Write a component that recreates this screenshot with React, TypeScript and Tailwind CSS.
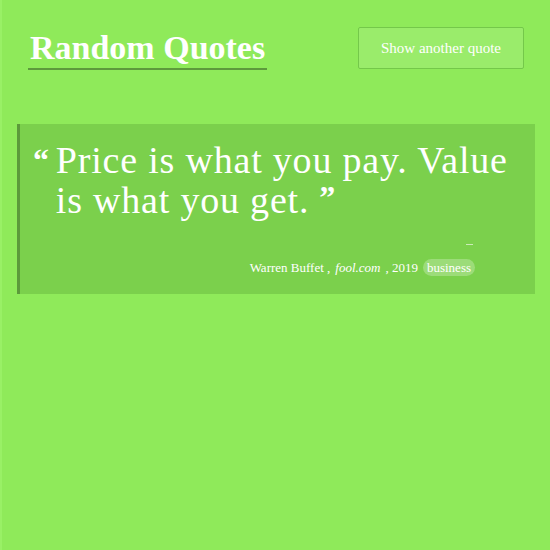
export default function App() {
  return (
    <div className="min-h-[550px] w-full bg-[#8fea5a] border-l-2 border-[#99f066] font-['Liberation_Serif',serif] text-white">
      {/* Header */}
      <header className="flex items-start justify-between pl-[26px] pr-[26px] pt-[29px]">
        <h1 className="border-b-2 border-[#5d9a3c] pb-[1px] px-[2px] text-[34px] font-bold leading-[38px]">
          Random Quotes
        </h1>
        <button className="mt-[-2px] h-[42px] w-[166px] rounded-[2px] border border-[#74c84a] bg-white/10 text-[15px]">
          Show another quote
        </button>
      </header>

      {/* Quote */}
      <section className="mt-[54px] ml-[15px] mr-[15px] h-[170px] border-l-[3px] border-[#5c9a3b] bg-[#7bd04c] pl-[13px] pr-[20px] pt-[16px]">
        <blockquote className="flex text-[38px] leading-[40px] tracking-[0.8px]">
          <span className="mr-[6px] text-[32px] font-bold">&ldquo;</span>
          <p className="w-[470px]">
            Price is what you pay. Value is what you get.
            <span className="ml-[10px] inline-block align-top text-[32px] font-bold leading-[34px]">&rdquo;</span>
          </p>
        </blockquote>
        <div className="mr-[42px] mt-[24px] flex justify-end">
          <span className="h-[1px] w-[7px] bg-white/60" />
        </div>
        <div className="mr-[40px] mt-[13px] flex items-center justify-end gap-[5px] text-[13px]">
          <span>Warren Buffet ,</span>
          <i>fool.com</i>
          <span>, 2019</span>
          <span className="rounded-full bg-white/25 px-[4px] leading-[17px]">business</span>
        </div>
      </section>
    </div>
  );
}
